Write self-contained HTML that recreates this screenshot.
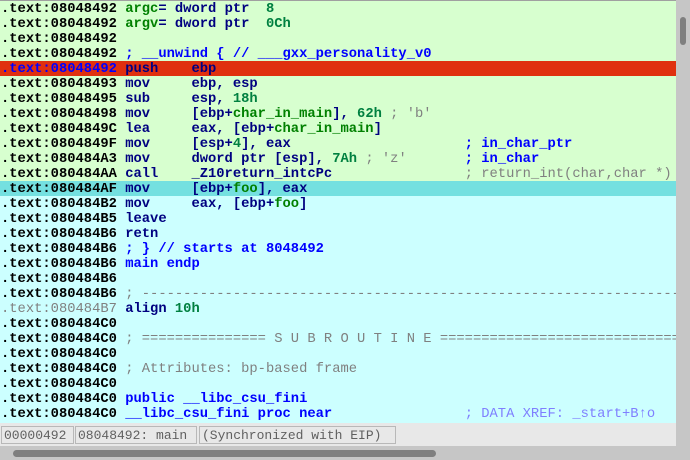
<!DOCTYPE html>
<html><head><style>
body{margin:0;width:690px;height:460px;overflow:hidden;background:#e8e8e8;position:relative;font-family:"Liberation Mono",monospace}
#v{position:absolute;left:0;top:0;width:676px;height:423px;background:#ccffff;border-top:1px solid #a0a0a0;box-sizing:border-box;overflow:hidden}
.r{height:15px;line-height:17px;font-size:13.8px;white-space:pre;font-weight:bold;color:#000;padding-left:1px;overflow:hidden}
.g{background:#d7ffcf}
.red{background:#e0300f}
.cy{background:#74e0e0}
.m{color:#000080}.n{color:#008000}.k{color:#008040}.c{color:#0000ff}.x{color:#808080;font-weight:normal}.l{color:#7f7fff;font-weight:normal}
.ga{color:#808080;font-weight:normal}
#vs{position:absolute;left:676px;top:0;width:14px;height:446px;background:#c6c6c6}
#vt{position:absolute;left:680px;top:17px;width:6px;height:28px;background:#7f7f7f;border-radius:3px}
#sb{position:absolute;top:425px;left:0;height:20px;width:676px;font-size:13px;color:#606060}
.f{position:absolute;top:1px;height:18px;line-height:18px;border:1px solid #b8b8b8;padding:0 2px;box-sizing:border-box}
#hs{position:absolute;left:0;top:446px;width:690px;height:14px;background:#c6c6c6}
#ht{position:absolute;left:13px;top:450px;width:423px;height:7px;background:#7f7f7f;border-radius:4px}
</style></head><body>
<div id="v">
<div class="r g">.text:08048492 <span class="n">argc</span><span class="m">= dword ptr  </span><span class="k">8</span></div>
<div class="r g">.text:08048492 <span class="n">argv</span><span class="m">= dword ptr  </span><span class="k">0Ch</span></div>
<div class="r g">.text:08048492</div>
<div class="r g">.text:08048492 <span class="c">; __unwind { // ___gxx_personality_v0</span></div>
<div class="r red"><span class="c">.text:08048492</span> <span class="m">push    ebp</span></div>
<div class="r g">.text:08048493 <span class="m">mov     ebp, esp</span></div>
<div class="r g">.text:08048495 <span class="m">sub     esp, </span><span class="k">18h</span></div>
<div class="r g">.text:08048498 <span class="m">mov     [ebp+</span><span class="n">char_in_main</span><span class="m">], </span><span class="k">62h</span> <span class="x">; 'b'</span></div>
<div class="r g">.text:0804849C <span class="m">lea     eax, [ebp+</span><span class="n">char_in_main</span><span class="m">]</span></div>
<div class="r g">.text:0804849F <span class="m">mov     [esp+</span><span class="k">4</span><span class="m">], eax</span>                     <span class="c">; in_char_ptr</span></div>
<div class="r g">.text:080484A3 <span class="m">mov     dword ptr [esp], </span><span class="k">7Ah</span> <span class="x">; 'z'</span>       <span class="c">; in_char</span></div>
<div class="r g">.text:080484AA <span class="m">call    _Z10return_intcPc</span>                <span class="x">; return_int(char,char *)</span></div>
<div class="r cy">.text:080484AF <span class="m">mov     [ebp+</span><span class="n">foo</span><span class="m">], eax</span></div>
<div class="r">.text:080484B2 <span class="m">mov     eax, [ebp+</span><span class="n">foo</span><span class="m">]</span></div>
<div class="r">.text:080484B5 <span class="m">leave</span></div>
<div class="r">.text:080484B6 <span class="m">retn</span></div>
<div class="r">.text:080484B6 <span class="c">; } // starts at 8048492</span></div>
<div class="r">.text:080484B6 <span class="c">main endp</span></div>
<div class="r">.text:080484B6</div>
<div class="r">.text:080484B6 <span class="x">; ---------------------------------------------------------------------------</span></div>
<div class="r"><span class="ga">.text:080484B7</span> <span class="m">align </span><span class="k">10h</span></div>
<div class="r">.text:080484C0</div>
<div class="r">.text:080484C0 <span class="x">; =============== S U B R O U T I N E =======================================</span></div>
<div class="r">.text:080484C0</div>
<div class="r">.text:080484C0 <span class="x">; Attributes: bp-based frame</span></div>
<div class="r">.text:080484C0</div>
<div class="r">.text:080484C0 <span class="c">public __libc_csu_fini</span></div>
<div class="r">.text:080484C0 <span class="c">__libc_csu_fini proc near</span>                <span class="l">; DATA XREF: _start+B↑o</span></div>
</div>
<div id="vs"></div><div id="vt"></div>
<div id="sb">
<div class="f" style="left:1px;width:73px">00000492</div>
<div class="f" style="left:75px;width:122px">08048492: main</div>
<div class="f" style="left:199px;width:197px">(Synchronized with EIP)</div>
</div>
<div id="hs"></div><div id="ht"></div>
</body></html>
